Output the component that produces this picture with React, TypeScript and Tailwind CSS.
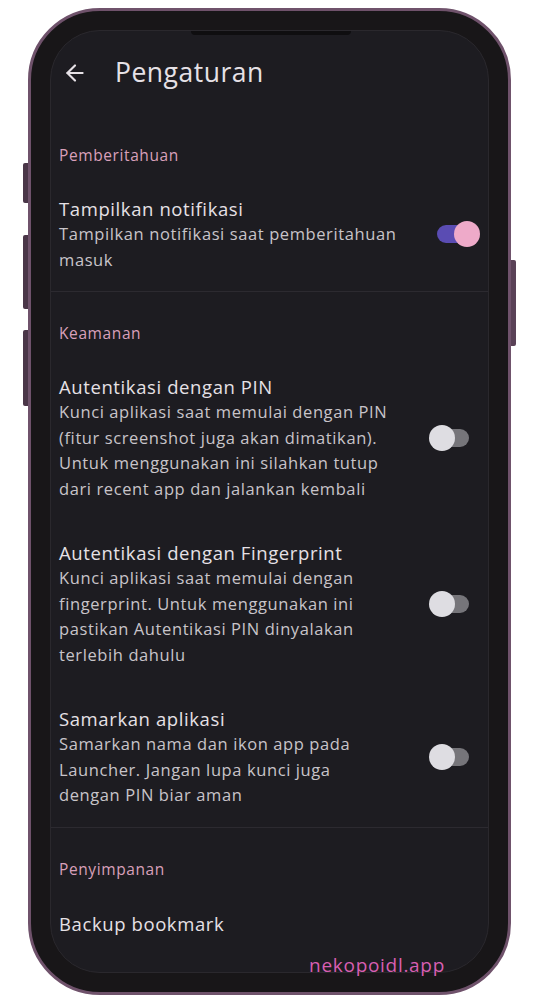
import { ArrowLeft } from "lucide-react";

type Item = {
  title: string;
  desc: string[];
  on?: boolean;
};

function Toggle({ on }: { on?: boolean }) {
  if (on) {
    return (
      <div className="flex items-center shrink-0 w-[51px] pl-[8px]">
        <div className="w-[31px] h-[18px] rounded-full bg-[#5a4cb3]" />
        <div className="relative z-10 -ml-[14px] w-[26px] h-[26px] rounded-full bg-[#eeaac9]" />
      </div>
    );
  }
  return (
    <div className="flex items-center shrink-0 w-[51px]">
      <div className="relative z-10 w-[26px] h-[26px] rounded-full bg-[#dedde2]" />
      <div className="-ml-[17px] w-[31px] h-[18px] rounded-full bg-[#76757a]" />
    </div>
  );
}

function SectionHeader({ label }: { label: string }) {
  return (
    <p className="px-[8px] text-[15.5px] leading-[25px] tracking-[0.6px] text-[#d9a0ba]">
      {label}
    </p>
  );
}

function SettingRow({ item }: { item: Item }) {
  return (
    <div className="flex items-center px-[8px]">
      <div className="flex-1 min-w-0">
        <p className="text-[18.5px] leading-[25px] tracking-[0.6px] text-[#e6e1e6]">
          {item.title}
        </p>
        {item.desc.map((line) => (
          <p
            key={line}
            className="text-[16.5px] leading-[25.5px] tracking-[0.6px] whitespace-nowrap text-[#c8c4c9]"
          >
            {line}
          </p>
        ))}
      </div>
      <Toggle on={item.on} />
    </div>
  );
}

const securityItems: Item[] = [
  {
    title: "Autentikasi dengan PIN",
    desc: [
      "Kunci aplikasi saat memulai dengan PIN",
      "(fitur screenshot juga akan dimatikan).",
      "Untuk menggunakan ini silahkan tutup",
      "dari recent app dan jalankan kembali",
    ],
  },
  {
    title: "Autentikasi dengan Fingerprint",
    desc: [
      "Kunci aplikasi saat memulai dengan",
      "fingerprint. Untuk menggunakan ini",
      "pastikan Autentikasi PIN dinyalakan",
      "terlebih dahulu",
    ],
  },
  {
    title: "Samarkan aplikasi",
    desc: [
      "Samarkan nama dan ikon app pada",
      "Launcher. Jangan lupa kunci juga",
      "dengan PIN biar aman",
    ],
  },
];

export default function App() {
  return (
    <div
      className="w-[535px] h-[1000px] bg-white overflow-hidden pt-[8px] pl-[28px]"
      style={{ fontFamily: "'Open Sans', 'Noto Sans', sans-serif" }}
    >
      <div className="relative w-[483px] h-[987px] rounded-[72px] border-[3px] border-[#6f526b] bg-[#181618] p-[19px]">
        {/* side buttons */}
        <div className="absolute left-[-8px] top-[152px] w-[5px] h-[40px] rounded-l-[2px] bg-[#4a3648]" />
        <div className="absolute left-[-8px] top-[224px] w-[5px] h-[74px] rounded-l-[2px] bg-[#4a3648]" />
        <div className="absolute left-[-8px] top-[319px] w-[5px] h-[76px] rounded-l-[2px] bg-[#4a3648]" />
        <div className="absolute right-[-8px] top-[249px] w-[5px] h-[86px] rounded-r-[2px] bg-[#5a4257]" />

        <div className="relative h-full rounded-[50px] bg-[#1d1c21] overflow-hidden border border-[#2a282d]">
          <div className="absolute left-[140px] top-0 w-[160px] h-[4px] rounded-b-[4px] bg-[#0f0e10]" />

          <div className="flex items-center h-[84px] pl-[11px]">
            <ArrowLeft className="w-[26px] h-[26px] text-[#e6e1e6]" strokeWidth={2} />
            <span className="ml-[27px] text-[26.5px] tracking-[0.5px] text-[#e6e1e6]">
              Pengaturan
            </span>
          </div>

          <div className="mt-[28px]">
            <SectionHeader label="Pemberitahuan" />
          </div>
          <div className="mt-[28px]">
            <SettingRow
              item={{
                title: "Tampilkan notifikasi",
                desc: ["Tampilkan notifikasi saat pemberitahuan", "masuk"],
                on: true,
              }}
            />
          </div>
          <div className="mt-[19px] h-px bg-[#2c2a30]" />

          <div className="mt-[29px]">
            <SectionHeader label="Keamanan" />
          </div>
          <div className="mt-[28px] flex flex-col gap-[39px]">
            {securityItems.map((item) => (
              <SettingRow key={item.title} item={item} />
            ))}
          </div>
          <div className="mt-[19px] h-px bg-[#2c2a30]" />

          <div className="mt-[29px]">
            <SectionHeader label="Penyimpanan" />
          </div>
          <p className="mt-[29px] px-[8px] text-[18.5px] leading-[25px] tracking-[0.6px] text-[#e6e1e6]">
            Backup bookmark
          </p>
        </div>

        {/* watermark overlay */}
        <span className="absolute right-[63px] bottom-[14px] text-[19px] leading-[26px] tracking-[0.7px] text-[#d85fb2]">
          nekopoidl.app
        </span>
      </div>
    </div>
  );
}
